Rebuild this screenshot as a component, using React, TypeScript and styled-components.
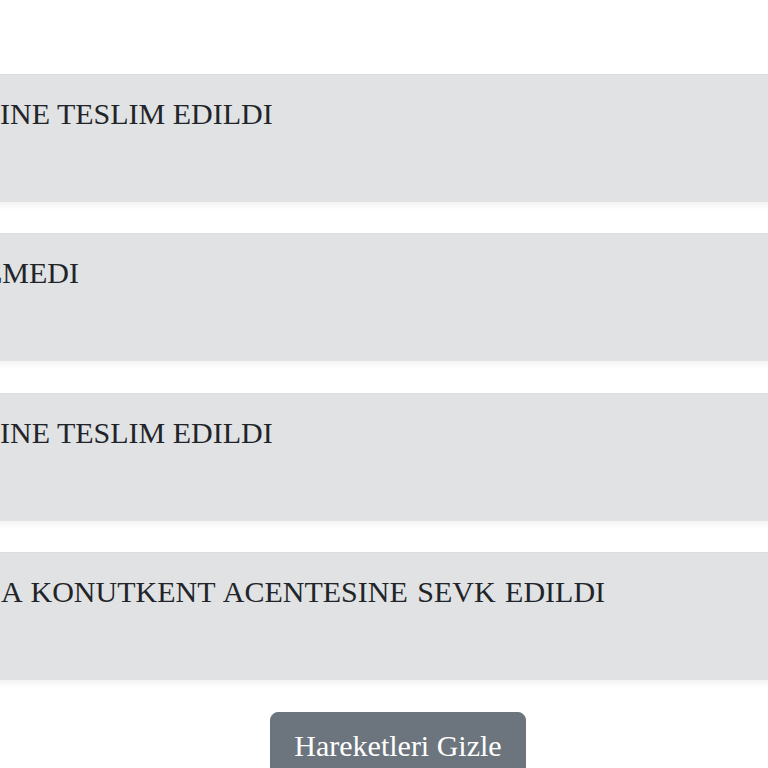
import React from "react";
import styled, { createGlobalStyle } from "styled-components";

const Global = createGlobalStyle`
  html, body {
    margin: 0;
    padding: 0;
    background: #ffffff;
    overflow: hidden;
  }
  body {
    font-family: "Liberation Serif", "Times New Roman", serif;
    color: #212529;
  }
`;

const Page = styled.main`
  display: flex;
  flex-direction: column;
  padding-top: 74px;
  width: 768px;
  height: 768px;
  box-sizing: border-box;
`;

const List = styled.ul`
  list-style: none;
  margin: 0;
  padding: 0;
  display: flex;
  flex-direction: column;
  gap: 31.3px;
`;

const Item = styled.li`
  box-sizing: border-box;
  height: 128px;
  margin: 0 -20px;
  padding: 16px 20px;
  background: #e1e2e4;
  border-top: 1px solid #dcdde0;
  box-shadow: 0 4px 6px rgba(0, 0, 0, 0.05);
  overflow: hidden;
`;

const Status = styled.p<{ $shift: number; $spacing: number }>`
  margin: 0 0 0 ${(p) => p.$shift}px;
  font-size: 30px;
  line-height: 45px;
  color: #212529;
  white-space: nowrap;
  word-spacing: ${(p) => p.$spacing}px;
`;

const Actions = styled.div`
  display: flex;
  justify-content: center;
  padding-left: 28px;
  margin-top: 32px;
`;

const Button = styled.button`
  font-family: "Liberation Serif", "Times New Roman", serif;
  font-size: 30px;
  line-height: 45px;
  color: #ffffff;
  background: #6c757d;
  border: 1px solid #6c757d;
  border-radius: 8px;
  padding: 10px 23px 6px;
  cursor: pointer;
`;

const rows = [
  { text: "INE TESLIM EDILDI", shift: 0, spacing: 0 },
  { text: "EMEDI", shift: -16, spacing: 0 },
  { text: "INE TESLIM EDILDI", shift: 0, spacing: 0 },
  { text: "A KONUTKENT ACENTESINE SEVK EDILDI", shift: 1, spacing: 2 },
];

export default function App() {
  return (
    <>
      <Global />
      <Page>
        <List>
          {rows.map((r, i) => (
            <Item key={i}>
              <Status $shift={r.shift} $spacing={r.spacing}>
                {r.text}
              </Status>
            </Item>
          ))}
        </List>
        <Actions>
          <Button type="button">Hareketleri Gizle</Button>
        </Actions>
      </Page>
    </>
  );
}
